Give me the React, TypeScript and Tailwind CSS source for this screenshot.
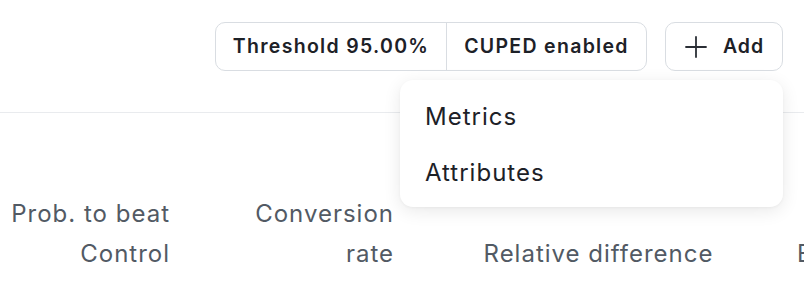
import React from "react";

export default function App() {
  return (
    <div
      className="relative w-[804px] h-[288px] overflow-hidden bg-white"
      style={{ fontFamily: "Inter, 'Noto Sans', sans-serif" }}
    >
      <div className="h-[113px] border-b border-[#e9ebee]">
        <div className="flex justify-end gap-[18px] pt-[22px] pr-[21px]">
          <div className="flex h-[49px] items-stretch rounded-[10px] border-[1.5px] border-[#d9dde2] text-[19.5px] font-semibold tracking-[1.3px] text-[#1d2127]">
            <div className="flex w-[231px] items-center justify-center border-r-[1.5px] border-[#d9dde2]">
              Threshold 95.00%
            </div>
            <div className="flex w-[199px] items-center justify-center">CUPED enabled</div>
          </div>
          <button className="flex h-[49px] w-[118px] items-center justify-center gap-[15px] rounded-[10px] border-[1.5px] border-[#d9dde2] text-[19.5px] font-semibold tracking-[1px] text-[#1d2127]">
            <svg width="24" height="24" viewBox="0 0 24 24" fill="none" stroke="#2a2e35" strokeWidth="1.8" strokeLinecap="round">
              <line x1="12" y1="2" x2="12" y2="22" />
              <line x1="2" y1="12" x2="22" y2="12" />
            </svg>
            <span>Add</span>
          </button>
        </div>
      </div>

      <div className="flex items-end pt-[81px] text-[24px] leading-[40px] tracking-[1px] text-[#525a64]">
        <div className="w-[170px] shrink-0 text-right">
          Prob. to beat
          <br />
          Control
        </div>
        <div className="w-[224px] shrink-0 text-right">
          Conversion
          <br />
          rate
        </div>
        <div className="w-[403px] shrink-0 pl-[6px] text-center">Relative difference</div>
        <div className="shrink-0 whitespace-nowrap">Bayesian</div>
      </div>

      <div className="absolute left-[400px] top-[80px] w-[383px] rounded-[13px] bg-white pt-[9px] pb-[6px] shadow-[0_4px_18px_rgba(0,0,0,0.09),0_1px_3px_rgba(0,0,0,0.04)]">
        <div className="flex h-[56px] items-center px-[25px] text-[24px] tracking-[1px] text-[#1d2127]">Metrics</div>
        <div className="flex h-[56px] items-center px-[25px] text-[24px] tracking-[1px] text-[#1d2127]">Attributes</div>
      </div>
    </div>
  );
}
